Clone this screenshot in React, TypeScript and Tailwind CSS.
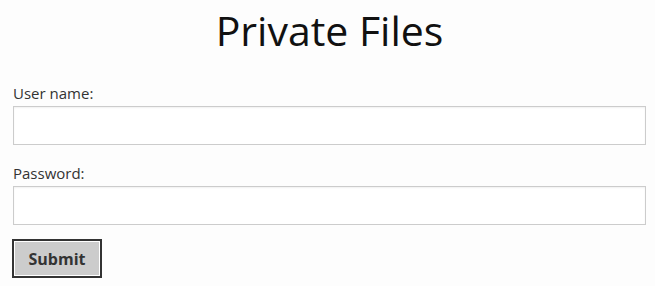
import { useState } from "react";

export default function App() {
  const [user, setUser] = useState("");
  const [pass, setPass] = useState("");

  return (
    <div className="min-h-screen bg-[#fdfdfd] px-[13px] pr-[9px] text-[#333] font-['Open_Sans',sans-serif]">
      <h1 className="text-center text-[41px] leading-[60px] font-normal text-[#111]">Private Files</h1>
      <form className="mt-[23px] flex flex-col" onSubmit={(e) => e.preventDefault()}>
        <label htmlFor="user" className="text-[15px] leading-[21px]">
          User name:
        </label>
        <input
          id="user"
          value={user}
          onChange={(e) => setUser(e.target.value)}
          className="mt-[2px] h-[39px] w-full border border-[#ccc] bg-white shadow-[inset_0_1px_2px_rgba(0,0,0,0.06)] outline-none"
        />
        <label htmlFor="pass" className="mt-[18px] text-[15px] leading-[21px]">
          Password:
        </label>
        <input
          id="pass"
          type="password"
          value={pass}
          onChange={(e) => setPass(e.target.value)}
          className="mt-[2px] h-[39px] w-full border border-[#ccc] bg-white shadow-[inset_0_1px_2px_rgba(0,0,0,0.06)] outline-none"
        />
        <div className="mt-[14px] flex">
          <span className="-ml-px border-2 border-[#333] bg-white p-px">
            <button type="submit" className="h-[33px] w-[84px] bg-[#ccc] text-[16px] font-bold text-[#333]">
              Submit
            </button>
          </span>
        </div>
      </form>
    </div>
  );
}
